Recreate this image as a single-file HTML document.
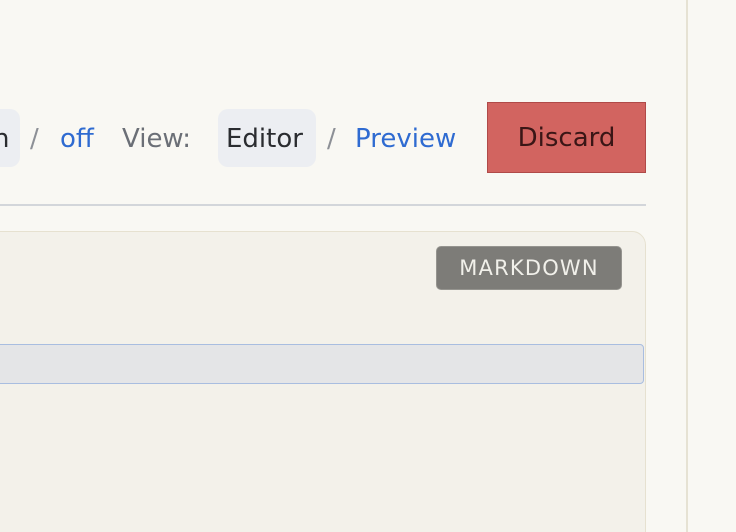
<!DOCTYPE html>
<html style="overflow:hidden;height:532px"><head><style>
body{margin:0;width:736px;height:532px;background:#f9f8f3;position:relative;overflow:hidden;font-family:"DejaVu Sans",sans-serif}
.a{position:absolute}
.t{font-size:26px;line-height:58px;top:110px}
</style></head><body>
<div class="a" style="left:686px;top:0;width:2px;height:532px;background:#e6e2d3"></div>
<div class="a" style="left:-20px;top:109px;width:40px;height:58px;background:#eceef2;border-radius:10px"></div>
<div class="a t" style="left:0;width:20px;overflow:hidden;color:#2a2c30"><span style="margin-left:-7px">n</span></div>
<div class="a t" style="left:30px;color:#8d9096">/</div>
<div class="a t" style="left:60px;color:#2f6bd1">off</div>
<div class="a t" style="left:122px;color:#6b6f76">View:</div>
<div class="a" style="left:218px;top:109px;width:98px;height:58px;background:#eceef2;border-radius:10px"></div>
<div class="a t" style="left:226px;color:#2a2c30">Editor</div>
<div class="a t" style="left:327px;color:#8d9096">/</div>
<div class="a t" style="left:355px;color:#2f6bd1">Preview</div>
<div class="a" style="left:487px;top:102px;width:157px;height:69px;background:#d26460;border:1px solid #b04a48;color:#3a1616;font-size:26px;line-height:70px;text-align:center">Discard</div>
<div class="a" style="left:0;top:204px;width:646px;height:2px;background:#d3d6da"></div>
<div class="a" style="left:-20px;top:231px;width:664px;height:320px;background:#f3f1ea;border:1.5px solid #e6e1d0;border-radius:14px"></div>
<div class="a" style="left:436px;top:246px;width:184px;height:42px;background:#7d7c78;border:1px solid #95948f;border-radius:5px;color:#f1f0ea;font-size:21px;line-height:43px;text-align:center;letter-spacing:1.2px">MARKDOWN</div>
<div class="a" style="left:-10px;top:344px;width:652px;height:38px;background:#e4e5e7;border:1px solid #a8bde0;border-radius:4px"></div>
</body></html>
